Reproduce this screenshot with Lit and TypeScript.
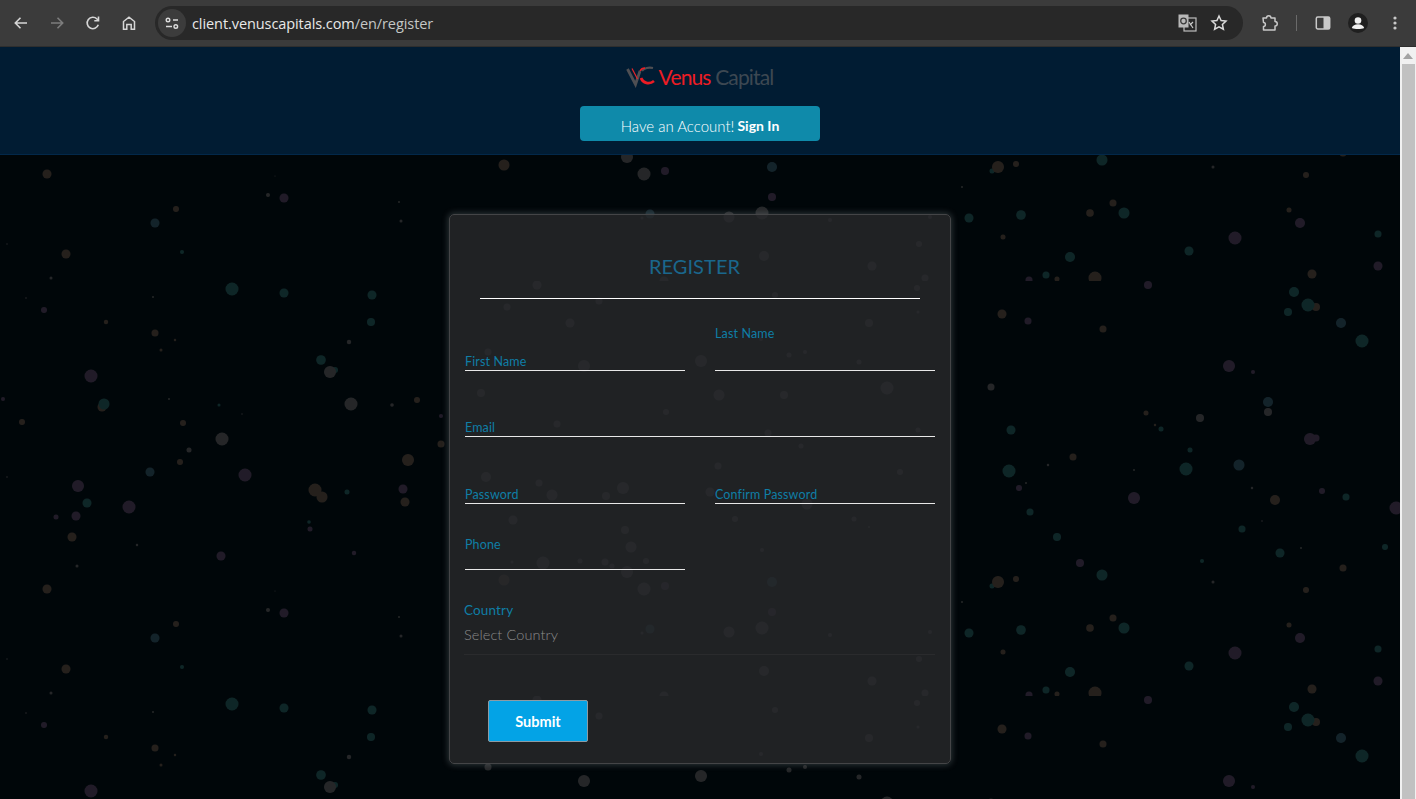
import { LitElement, html, css, svg } from "lit";
import { customElement } from "lit/decorators.js";

const PAL: Record<string, string> = {
  t: "#0e2627", b: "#25201c", p: "#211b28", g: "#252628", u: "#13232a",
};
const DOTS = `47,174,4.5,b 176,209,3,b 155,223,4.5,u 66,254,4.5,b 182,252,2,t 268,195,2,g 284,198,4.5,p 399,202,1,g 401,221,1.5,g 275,176,.5,g 7,244,.7,g 51,278,1.5,g 26,298,.8,g 44,310,3,p 153,297,1,g 232,289,6.5,t 284,293,4.5,t 372,295,4.5,t 371,322,4,t 106,322,2.2,b 155,333,3.5,b 175,340,1.2,b 161,350,1.5,b 349,342,2.2,g 321,360,4.8,t 335,370,3,t 330,372,6,g 91,376,6.5,p 3,399,2,p 102,407,4.5,b 104,404,5.5,t 169,399,1,g 219,405,1.5,t 242,414,.7,g 351,404,6.5,g 392,405,1.8,g 417,400,3,b 441,416,2,p 22,422,3,b 183,423,3,b 222,439,6.5,g 189,450,2.5,g 441,444,3.5,b
992,171,2.5,t 998,167,6,b 1016,164,3,b 1102,160,5.5,t 1213,167,1.5,g 1306,175,3,b 962,187,1,g 969,218,4.5,t 1021,215,4.8,t 1090,213,3.8,b 1113,203,3.5,b 1124,213,5.5,t 1289,210,2.5,b 1300,223,5,p 1235,238,6.5,p 1189,251,4.5,t 1378,234,3.5,t 1378,266,4.5,p 1003,237,2.5,b 1070,257,5,t 1046,275,3.5,t 1057,279,2.5,b 1095,278,6.5,b 1029,280,3.5,p 1148,285,4,p 1312,274,4.5,b 1294,292,5,t 1316,307,4,b 1308,305,6.5,t 1288,312,4,t 1341,323,5,u 1362,341,6.5,t 1002,314,4.5,b 1028,321,3.5,p 1103,329,3.5,b 1229,366,6,p 1253,372,2,p 1268,402,5,u 1268,412,4,g 1200,418,4,g 1146,413,2.5,b 1155,425,1.2,b 1161,429,2.5,t 1011,430,4.5,t 991,387,3.5,g 1190,450,2.5,t 1316,438,3.5,p 1310,439,6,p
504,165,5.5,b 644,174,6.5,g 665,171,4,p 772,167,5,u 772,197,4,p 650,214,4.5,u 729,217,5.5,g 762,213,6.5,g 642,218,1.5,g 930,217,2,g 830,220,2,g 919,244,3,g 764,256,5,g 872,266,4.5,g 537,285,4.5,g 664,280.9,4.5,g 925,278,3.5,g 507,307,3.5,g 599,301,3.5,g 775,295,3,g 917,288,3,g 918,312,1.5,g 570,323,4.5,g 869,323,4,g 488,352,3.5,g 761,339,2,g 789,355,2.5,g 805,352,2,g 859,362,2.5,g 701,361,6,g 584,366,6,g
481,393,4,g 719,395,5.5,g 784,395,4,g 887,388,6.5,g 666,412,3,g 557,424,3.5,g 768,433,3.5,g 918,430,2.5,g 801,446,2.5,g 718,466,3.5,g 900,472,3,g 486,477,5,g 539,483,3.5,g 623,488,6,g 552,495,5.5,g 606,496,4,g 710,492,4.5,g 807,504,5.5,g 735,519,3,g 854,519,2.5,g 869,527,1,g 513,520,4.5,g 625,530,4,g 631,547,5.5,g 762,550,2,g 543,563,6.5,g 580,561,2.5,g 605,562,3.5,g 646,561,3,g 512,562,1.5,g 612,566,2.5,g 627,572,6,g
180,462,3,b 150,472,4.5,u 245,475,6.5,p 408,460,6,b 78,486,6,p 87,503,4.5,t 129,507,6.5,p 315,490,6.5,b 322,497,5.5,b 347,492,2.5,t 403,489,4.5,p 405,502,4.5,b 56,517,2.5,p 76,516,4.5,p 309,522,1.8,t 310,529,2.5,p 72,537,4.5,b 137,545,1.2,g 221,556,4.5,p 354,553,2.2,p 77,566,1.5,g 7,477,.8,g
1073,457,3.5,b 1009,471,6.5,t 1048,465,1.2,g 1186,469,6.5,t 1239,465,5.5,u 1134,470,1,g 1026,483,1,g 1019,488,3,p 1134,498,6,p 1275,500,5,b 1322,491,3,p 1346,497,3.5,t 1396,508,6.5,p 1252,488,1.2,g 1030,512,3.5,t 1242,529,3.5,t 1262,521,.8,g 1057,537,4,t 1280,553,4.5,t 1385,547,3,t 1301,548,1,g 1080,563,4,p 1202,561,2,t 1343,568,3.5,b`;

const TILE_TOP = 281;
const TILE_H = 415;
const dots = DOTS.trim().split(/\s+/).map((d) => {
  const [x, y, r, c] = d.split(",");
  const ty = ((Number(y) - TILE_TOP) % TILE_H + TILE_H) % TILE_H;
  return { x: Number(x), y: ty, r: Number(r), c: PAL[c] };
});

@customElement("app-root")
export class AppRoot extends LitElement {
  static styles = css`
    :host { display: block; height: 799px; overflow: hidden; background: #000609; font-family: "Lato", "Open Sans", sans-serif; }
    .chrome { height: 46px; display: flex; align-items: center; background: #3b3b3b; border-bottom: 1px solid #2e2e2e; padding: 0 0 0 3px; box-sizing: content-box; }
    .nav { width: 36px; height: 36px; display: grid; place-items: center; flex: none; }
    .nav svg, .tool svg { display: block; }
    .omni { flex: none; width: 1088px; height: 34px; margin-left: 8px; margin-right: 8px; border-radius: 17px; background: #282828; display: flex; align-items: center; padding: 0 8px 0 3px; box-sizing: border-box; }
    .tune { width: 28px; height: 28px; border-radius: 50%; background: #3c3c3c; display: grid; place-items: center; flex: none; }
    .url { flex: 1; margin-left: 6px; font: 14.5px "Open Sans", sans-serif; letter-spacing: -0.08px; color: #e8e8e8; white-space: nowrap; }
    .url span { color: #c4c7c5; }
    .tool { width: 32px; height: 32px; display: grid; place-items: center; flex: none; }
    .tools { display: flex; align-items: center; margin-left: 2px; }
    .sep { width: 1px; height: 16px; background: #6a6a6a; margin: 0 10px 0 11px; flex: none; }
    .page { display: flex; height: 752px; }
    .content { width: 1400px; flex: none; display: flex; flex-direction: column; }
    .bar { width: 16px; flex: none; background: #f1f1f1; display: flex; flex-direction: column; }
    .arrow { height: 17px; display: grid; place-items: center; }
    .thumb { flex: 1; background: #c1c1c1; margin: 0 1px 0 2px; }
    header { height: 108px; flex: none; box-sizing: border-box; background: #011c33; display: flex; flex-direction: column; align-items: center; padding-top: 16px; border-bottom: 1px solid #02284a; }
    .logo { display: flex; align-items: center; height: 26px; margin-right: 3px; }
    .mark { margin-left: 2px; margin-right: -1px; }
    .brand { font-size: 21px; letter-spacing: -0.85px; color: #ed1c24; margin-left: 1px; white-space: nowrap; }
    .brand span { color: #3d4852; }
    .have { margin-top: 17px; width: 240px; height: 35px; box-sizing: border-box; padding-top: 4px; border-radius: 4px; background: #0f8aaa; color: #fff; font-size: 15px; font-weight: 300; display: flex; align-items: center; justify-content: center; gap: 3px; }
    .have b { font-weight: 700; font-size: 14px; }
    main { flex: 1; position: relative; overflow: hidden; display: flex; justify-content: center; align-items: flex-start; padding-top: 59px; }
    .sky { position: absolute; inset: 0; width: 100%; height: 100%; }
    .card { position: relative; width: 502px; height: 550px; box-sizing: border-box; border: 1px solid #444547; border-radius: 5px; background: rgba(40, 41, 44, 0.8); box-shadow: 0 0 6px 1px rgba(160, 175, 180, .28); padding: 0 15px; color: #0f7ea6; }
    h1 { margin: 0; height: 83px; box-sizing: border-box; padding: 37px 11px 0 0; font-size: 20px; font-weight: 400; line-height: 28px; text-align: center; color: #1a678d; letter-spacing: .05px; }
    .rule { height: 1px; background: #fff; margin: 0 15px; }
    .row { display: grid; grid-template-columns: 220px 220px; gap: 30px; }
    .field { display: flex; flex-direction: column; justify-content: flex-end; border-bottom: 1px solid #e8e8e8; height: 67px; box-sizing: border-box; font-size: 12.5px; line-height: 16px; letter-spacing: .14px; padding-bottom: 0; }
    .first { height: 72px; }
    .email { height: 66px; }
    .last { padding-bottom: 28px; }
    .phone { height: 66px; padding-bottom: 16px; }
    .country { margin-top: 31px; margin-left: -1px; border-bottom: 1px solid #2a2b2d; height: 54px; width: 471px; box-sizing: border-box; font-size: 13.5px; letter-spacing: .15px; line-height: 18px; }
    .select { margin-top: 6px; font-size: 14.5px; font-weight: 300; letter-spacing: .1px; line-height: 20px; color: #8b8b8b; }
    button { display: block; margin: 45px 0 0 23px; width: 100px; height: 42px; box-sizing: border-box; background: #03a3e6; color: #fff; border: 1px solid #8e9ba3; border-radius: 2px; font: 700 14.5px "Lato", sans-serif; padding: 0; }
  `;

  render() {
    return html`
      <div class="chrome">
        <div class="nav"><svg width="18" height="18" viewBox="0 0 18 18" fill="none" stroke="#d6d6d6" stroke-width="1.6"><path d="M15 9H3.5M8.5 3.8 3.3 9l5.2 5.2"/></svg></div>
        <div class="nav"><svg width="18" height="18" viewBox="0 0 18 18" fill="none" stroke="#7d7d7d" stroke-width="1.6"><path d="M3 9h11.5M9.5 3.8 14.7 9l-5.2 5.2"/></svg></div>
        <div class="nav"><svg width="18" height="18" viewBox="0 0 18 18" fill="none" stroke="#d6d6d6" stroke-width="1.6"><path d="M14.3 10.8A5.7 5.7 0 1 1 13 5l1.4 1.5"/><path d="M14.5 2.6v4.2h-4.2" /></svg></div>
        <div class="nav"><svg width="18" height="18" viewBox="0 0 18 18" fill="none" stroke="#d6d6d6" stroke-width="1.5"><path d="M3.5 15.2V7.5L9 3.2l5.5 4.3v7.7h-3.3v-4.6H6.8v4.6z"/></svg></div>
        <div class="omni">
          <div class="tune"><svg width="16" height="16" viewBox="0 0 16 16" fill="none" stroke="#dcdcdc" stroke-width="1.4"><path d="M2 11.500h6M9 5h5"/><circle cx="11.800" cy="11.500" r="1.800"/><circle cx="4" cy="5" r="1.800" fill="#3c3c3c"/></svg></div>
          <div class="url">client.venuscapitals.com<span>/en/register</span></div>
          <div class="tool"><svg width="20" height="20" viewBox="0 0 20 20"><rect x="7" y="5" width="12" height="13" fill="none" stroke="#bdbdbd" stroke-width="1.2"/><path d="M1.500 1.500h10v13h-10z" fill="#b8b8b8"/><circle cx="6.500" cy="8" r="2.800" fill="none" stroke="#3a3a3a" stroke-width="1.300"/><path d="m12 9 4 6M16 9l-3 3" stroke="#c9c9c9" stroke-width="1.200" fill="none"/></svg></div>
          <div class="tool"><svg width="18" height="18" viewBox="0 0 18 18" fill="none" stroke="#dadada" stroke-width="1.500"><path d="m9 2 2.100 4.500 4.900.6-3.600 3.300 1 4.800L9 12.800 4.600 15.200l1-4.800L2 7.100l4.900-.6z"/></svg></div>
        </div>
        <div class="tools">
          <div class="tool"><svg width="20" height="20" viewBox="0 0 20 20" fill="none" stroke="#c9c9c9" stroke-width="1.500"><path d="M4 5h3.500c0-3 4.500-3 4.500 0H16v3.500c3 0 3 4.500 0 4.500v4H4.500v-3.500c2.500 0 2.500-4 0-4z" stroke-linejoin="round"/></svg></div>
          <div class="sep"></div>
          <div class="tool"><svg width="18" height="18" viewBox="0 0 18 18"><rect x="2.300" y="3" width="13.400" height="12" rx="1.500" fill="none" stroke="#c9c9c9" stroke-width="1.500"/><rect x="9.500" y="3" width="6" height="12" fill="#c9c9c9"/></svg></div>
          <div class="tool" style="margin-left:3px"><svg width="20" height="20" viewBox="0 0 20 20"><circle cx="10" cy="10" r="10" fill="#1f1f1f"/><circle cx="10" cy="7.500" r="3.300" fill="#f1f1f1"/><path d="M3.800 15c.8-2.600 3.200-3.800 6.200-3.800s5.400 1.200 6.200 3.800c-1.500.7-3.800 1-6.200 1s-4.700-.3-6.200-1z" fill="#f1f1f1"/></svg></div>
          <div class="tool" style="margin-left:5px"><svg width="16" height="16" viewBox="0 0 16 16" fill="#c9c9c9"><circle cx="8" cy="3" r="1.600"/><circle cx="8" cy="8" r="1.600"/><circle cx="8" cy="13" r="1.600"/></svg></div>
        </div>
      </div>
      <div class="page">
        <div class="content">
          <header>
            <div class="logo">
              <svg class="mark" width="33" height="24" viewBox="0 0 33 24" fill="none">
                <path d="M1.500 5 9.500 20.500 14 7" stroke="#4f4f53" stroke-width="2.800"/>
                <path d="M6 4.500 11.500 15" stroke="#e8262a" stroke-width="1.200"/>
                <path d="M16 7c2-3 7-4 11-3" stroke="#4f4f53" stroke-width="2.200"/>
                <path d="M15 14c2 5 8 7 13 3" stroke="#ec1c24" stroke-width="2.800"/>
                <path d="M14 7c1-2 3-3 5-3" stroke="#ec1c24" stroke-width="1.500"/>
              </svg>
              <div class="brand">Venus <span>Capital</span></div>
            </div>
            <div class="have">Have an Account! <b>Sign In</b></div>
          </header>
          <main>
            <svg class="sky" aria-hidden="true">
              <defs>
                <pattern id="stars" patternUnits="userSpaceOnUse" x="0" y="126" width="1400" height="${TILE_H}">
                  ${dots.map((d) => svg`<circle cx="${d.x}" cy="${d.y}" r="${d.r}" fill="${d.c}"></circle>`)}
                </pattern>
              </defs>
              <rect width="100%" height="100%" fill="url(#stars)"></rect>
            </svg>
            <section class="card">
              <h1>REGISTER</h1>
              <div class="rule"></div>
              <div class="row">
                <div class="field first">First Name</div>
                <div class="field first last">Last Name</div>
              </div>
              <div class="field email">Email</div>
              <div class="row">
                <div class="field">Password</div>
                <div class="field">Confirm Password</div>
              </div>
              <div class="row">
                <div class="field phone">Phone</div>
              </div>
              <div class="country">Country<div class="select">Select Country</div></div>
              <button>Submit</button>
            </section>
          </main>
        </div>
        <div class="bar">
          <div class="arrow"><svg width="10" height="6" viewBox="0 0 10 6"><path d="M5 0 10 6H0z" fill="#a3a3a3"/></svg></div>
          <div class="thumb"></div>
        </div>
      </div>
    `;
  }
}
